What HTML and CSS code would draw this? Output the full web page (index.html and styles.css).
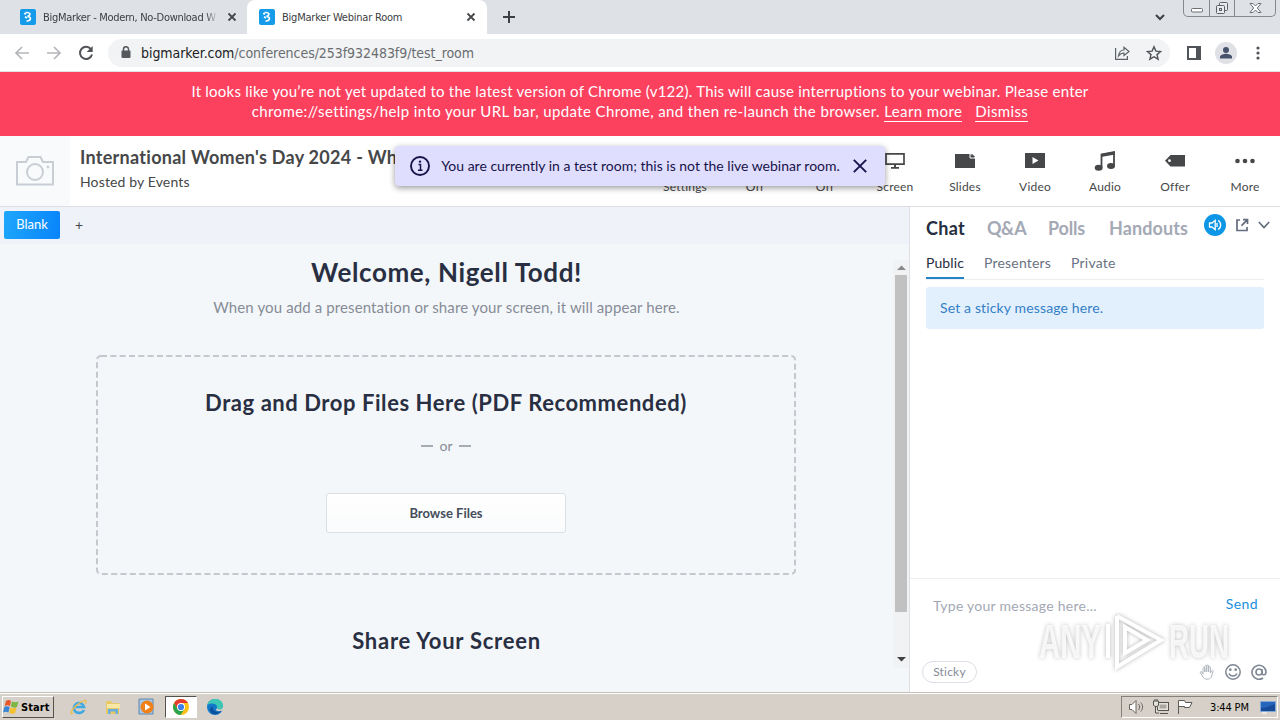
FILE: index.html
```html
<!DOCTYPE html>
<html lang="en">
  <head>
    <meta charset="UTF-8" />
    <meta name="viewport" content="width=device-width, initial-scale=1.0" />
    <title>BigMarker Webinar Room</title>
    <link rel="stylesheet" href="styles.css">
  </head>
  <body>
    <!-- Browser tabs -->
    <div class="tab-strip">
      <div class="tab">
        <svg class="favicon" width="16" height="16" viewBox="0 0 16 16"><rect width="16" height="16" rx="2" fill="#159bea"/><path d="M4 4.500l2 .5M5.500 3.500c5-.5 6 2 2 4 4.500 0 3.500 5-1 4.500M5 7.800l2 1.200" fill="none" stroke="#fff" stroke-width="1.600"/></svg>
        <span class="tab-title fade">BigMarker - Modern, No-Download W</span>
        <svg class="tab-close" width="10" height="10" viewBox="0 0 10 10"><path d="M1.500 1.500l7 7M8.500 1.500l-7 7" stroke="#45484c" stroke-width="1.800"/></svg>
      </div>
      <div class="tab active">
        <svg class="favicon" width="16" height="16" viewBox="0 0 16 16"><rect width="16" height="16" rx="2" fill="#159bea"/><path d="M4 4.500l2 .5M5.500 3.500c5-.5 6 2 2 4 4.500 0 3.500 5-1 4.500M5 7.800l2 1.200" fill="none" stroke="#fff" stroke-width="1.600"/></svg>
        <span class="tab-title">BigMarker Webinar Room</span>
        <svg class="tab-close" width="10" height="10" viewBox="0 0 10 10"><path d="M1.500 1.500l7 7M8.500 1.500l-7 7" stroke="#45484c" stroke-width="1.800"/></svg>
      </div>
      <svg class="new-tab" width="12" height="12" viewBox="0 0 12 12"><path d="M6 0v12M0 6h12" stroke="#3c4043" stroke-width="2"/></svg>
      <svg class="tab-search" width="10" height="7" viewBox="0 0 10 7"><path d="M1 1l4 4 4-4" fill="none" stroke="#3c4043" stroke-width="2"/></svg>
      <div class="window-buttons">
        <span><svg width="12" height="16" viewBox="0 0 12 16"><rect x=".5" y="8.500" width="11" height="3.500" rx="1" fill="#fff" stroke="#6b6e73"/></svg></span>
        <span><svg width="14" height="14" viewBox="0 0 14 14" fill="#e8eaee" stroke="#5c5f64"><rect x="4.500" y="1.500" width="8" height="8" rx="1"/><rect x="1.500" y="4.500" width="8" height="8" rx="1"/><rect x="4.500" y="7.500" width="2" height="2"/></svg></span>
        <span><svg width="13" height="12" viewBox="0 0 13 12"><path d="M1 1.500h3L6.500 4 9 1.500h3L8.300 6l3.700 4.500H9L6.500 8 4 10.500H1L4.700 6z" fill="#fff" stroke="#6b6e73"/></svg></span>
      </div>
    </div>

    <!-- Address bar -->
    <div class="toolbar">
      <svg class="nav-icon" width="16" height="16" viewBox="0 0 16 16"><path d="M15 8H2M8 2L2 8l6 6" fill="none" stroke="#b4b6b9" stroke-width="1.700"/></svg>
      <svg class="nav-icon" width="16" height="16" viewBox="0 0 16 16"><path d="M1 8h13M8 2l6 6-6 6" fill="none" stroke="#b4b6b9" stroke-width="1.700"/></svg>
      <svg class="nav-icon" width="16" height="16" viewBox="0 0 16 16"><path d="M13.200 4.500A6.100 6.100 0 1 0 14 9.500" fill="none" stroke="#505357" stroke-width="2"/><path d="M14.700 1v6H8.700z" fill="#505357"/></svg>
      <div class="url-bar">
        <svg width="10" height="13" viewBox="0 0 10 13"><rect x=".5" y="4.500" width="9" height="7.500" rx="1" fill="#55585c"/><path d="M2.500 5V3.200a2.500 2.500 0 0 1 5 0V5" fill="none" stroke="#55585c" stroke-width="1.500"/></svg>
        <span class="url"><b>bigmarker.com</b>/conferences/253f932483f9/test_room</span>
        <svg class="share" width="16" height="16" viewBox="0 0 16 16" fill="none" stroke="#5f6368" stroke-width="1.200"><path d="M1.600 3v11.400h11.800V11"/><path d="M4.500 11C5 7 7 5 10 5V2.300L15 6.500 10 10.500V8C7.500 8 6 9 4.500 11z"/></svg>
        <svg width="16" height="16" viewBox="0 0 16 16"><path d="M8 1.800l1.900 4.300 4.700.4-3.600 3.100 1.100 4.600L8 11.700l-4.100 2.500L5 9.600 1.400 6.500l4.700-.4z" fill="none" stroke="#505357" stroke-width="1.400"/></svg>
      </div>
      <svg class="panel-icon" width="14" height="14" viewBox="0 0 14 14"><rect x="1" y="1" width="12" height="12" fill="none" stroke="#505357" stroke-width="2"/><path d="M9 1h4v12H9z" fill="#505357"/></svg>
      <svg class="avatar" width="22" height="22" viewBox="0 0 22 22"><circle cx="11" cy="11" r="11" fill="#dfe1e6"/><circle cx="11" cy="8" r="3" fill="#46526b"/><path d="M5 16.500v-1.700c0-2 4-3 6-3s6 1 6 3v1.700z" fill="#46526b"/></svg>
      <svg class="kebab" width="4" height="14" viewBox="0 0 4 14" fill="#505357"><circle cx="2" cy="2" r="1.600"/><circle cx="2" cy="7" r="1.600"/><circle cx="2" cy="12" r="1.600"/></svg>
    </div>

    <!-- Update warning -->
    <div class="banner">
      <div class="banner-line one">It looks like you’re not yet updated to the latest version of Chrome (v122). This will cause interruptions to your webinar. Please enter</div>
      <div class="banner-line two">chrome://settings/help into your URL bar, update Chrome, and then re-launch the browser. <a>Learn more</a><a class="dismiss">Dismiss</a></div>
    </div>

    <!-- Room header -->
    <header class="room-header">
      <div class="room-photo">
        <svg width="40" height="32" viewBox="0 0 40 32" fill="none" stroke="#c9ced4" stroke-width="2"><path d="M2 7h9l2.500-5h12L28 7h10v22.500H2z"/><circle cx="20" cy="17" r="8"/><circle cx="33" cy="12" r="1" fill="#c9ced4" stroke-width="1"/></svg>
      </div>
      <div class="room-info">
        <h1>International Women's Day 2024 - Wh</h1>
        <p>Hosted by Events</p>
      </div>
      <nav class="actions">
        <div class="action"><span class="action-icon"></span>Settings</div>
        <div class="action"><span class="action-icon"></span>Off</div>
        <div class="action"><span class="action-icon"></span>Off</div>
        <div class="action"><svg class="action-icon" viewBox="0 0 22 20"><path d="M2 2.800h18v10.400H2z" fill="none" stroke="#454749" stroke-width="1.700"/><path d="M10 13h2v3h3v1.700H7V16h3z" fill="#454749"/></svg>Screen</div>
        <div class="action"><svg class="action-icon" viewBox="0 0 22 20"><path d="M1 3h15l5 4v10H1z" fill="#454749"/><path d="M16 2.500V7h5" fill="none" stroke="#fff"/><path d="M17.500 2.500L21 5.700V6h-3.500z" fill="#454749"/></svg>Slides</div>
        <div class="action"><svg class="action-icon" viewBox="0 0 22 20"><path d="M1 2h20v15H1z" fill="#454749"/><path d="M8.500 6l6 3.500-6 3.500z" fill="#fff"/></svg>Video</div>
        <div class="action"><svg class="action-icon" viewBox="0 0 22 20"><path d="M7.500 16V3.500L20 1.200V14" fill="none" stroke="#454749" stroke-width="1.800"/><path d="M7 3l14-2.500v3L7 6z" fill="#454749"/><ellipse cx="4.700" cy="16.700" rx="4" ry="3" fill="#454749"/><ellipse cx="17" cy="15" rx="4" ry="3" fill="#454749"/></svg>Audio</div>
        <div class="action"><svg class="action-icon" viewBox="0 0 22 20"><path d="M6.500 4H21v11.500H6.500L1 9.700z" fill="#454749"/><circle cx="5.500" cy="9.700" r="1.400" fill="#fff"/></svg>Offer</div>
        <div class="action"><svg class="action-icon" viewBox="0 0 22 20" fill="#454749"><circle cx="3.500" cy="10" r="2.300"/><circle cx="11" cy="10" r="2.300"/><circle cx="18.500" cy="10" r="2.300"/></svg>More</div>
      </nav>
      <div class="toast">
        <svg width="20" height="20" viewBox="0 0 20 20"><circle cx="10" cy="10" r="9" fill="none" stroke="#17124a" stroke-width="1.900"/><path d="M8.500 8.500h2V14M8 14.200h4.500" fill="none" stroke="#17124a" stroke-width="1.500"/><circle cx="10" cy="5.600" r="1.200" fill="#17124a"/></svg>
        <span>You are currently in a test room; this is not the live webinar room.</span>
        <svg width="14" height="14" viewBox="0 0 14 14"><path d="M.8.8l12.400 12.400M13.200.8L.8 13.200" stroke="#17124a" stroke-width="1.900"/></svg>
      </div>
    </header>

    <main class="room">
      <!-- Presentation area -->
      <section class="stage">
        <div class="slide-tabs">
          <button class="blank-tab">Blank</button>
          <span class="add-tab">+</span>
        </div>
        <div class="stage-body">
          <div class="welcome">
            <h2>Welcome, Nigell Todd!</h2>
            <p class="subtitle">When you add a presentation or share your screen, it will appear here.</p>
            <div class="dropzone">
              <svg class="dash-border" width="700" height="220"><rect x="1" y="1" width="698" height="218" rx="4" fill="none" stroke="#c5c9cd" stroke-width="2" stroke-dasharray="6 3.330"/></svg>
              <h3>Drag and Drop Files Here (PDF Recommended)</h3>
              <div class="or">or</div>
              <button class="browse">Browse Files</button>
            </div>
            <h3 class="share-title">Share Your Screen</h3>
          </div>
          <div class="scrollbar">
            <svg width="9" height="5" viewBox="0 0 9 5"><path d="M0 5l4.500-4.500L9 5z" fill="#8a8a8a"/></svg>
            <div class="thumb"></div>
            <svg width="9" height="5" viewBox="0 0 9 5"><path d="M0 0l4.500 4.500L9 0z" fill="#404040"/></svg>
          </div>
        </div>
      </section>

      <!-- Chat -->
      <aside class="chat">
        <div class="panel-tabs">
          <span class="panel-tab current t-chat">Chat</span>
          <span class="panel-tab t-qa">Q&amp;A</span>
          <span class="panel-tab t-polls">Polls</span>
          <span class="panel-tab t-handouts">Handouts</span>
          <svg class="sound" width="22" height="22" viewBox="0 0 22 22"><circle cx="11" cy="11" r="11" fill="#0d96e6"/><path d="M5.500 9H8l3.200-2.700v9.400L8 13H5.500zM13 9v4M14 6.500c3.500 1.500 3.500 7.500 0 9" fill="none" stroke="#fff" stroke-width="1.300"/></svg>
          <svg class="popout" width="14" height="14" viewBox="0 0 14 14" fill="none" stroke="#626c7c" stroke-width="1.700"><path d="M5 2H2v10.500h10V9M8 1.700h4.500V6M12.300 1.900L6.500 7.700"/></svg>
          <svg class="chevron" width="12" height="8" viewBox="0 0 12 8"><path d="M.8 1L6 6.500 11.200 1" fill="none" stroke="#626c7c" stroke-width="1.700"/></svg>
        </div>
        <div class="chat-tabs">
          <span class="chat-tab current">Public</span>
          <span class="chat-tab">Presenters</span>
          <span class="chat-tab">Private</span>
        </div>
        <div class="sticky">Set a sticky message here.</div>
        <div class="composer">
          <div class="composer-top">
            <span class="placeholder">Type your message here...</span>
            <span class="send">Send</span>
          </div>
          <div class="composer-bottom">
            <span class="sticky-btn">Sticky</span>
            <svg width="16" height="16" viewBox="0 0 16 16" fill="none" stroke="#b0b6bf"><path d="M4 10V4.500c0-1.500 1.800-1.500 1.800 0V8 2.500c0-1.500 1.900-1.500 1.900 0V8 2c0-1.300 1.900-1.300 1.900 0v6-4.500c0-1.300 1.800-1.300 1.800 0V9l1-2c.8-1.200 2-.7 1.600.6L12.300 13c-2 3-6.300 3-8.300 0L1.500 9c-.8-1.300.7-1.800 1.500-.8z"/></svg>
            <svg width="16" height="16" viewBox="0 0 16 16" fill="none" stroke="#7f8794" stroke-width="1.500"><circle cx="8" cy="8" r="7.200"/><path d="M4 9.500c1.300 3.300 6.700 3.300 8 0"/><circle cx="5.300" cy="5.700" r=".6"/><circle cx="10.700" cy="5.700" r=".6"/></svg>
            <svg width="16" height="16" viewBox="0 0 16 16" fill="none" stroke="#7f8794" stroke-width="1.600"><circle cx="8" cy="8" r="3"/><path d="M11 5v4c0 2.500 4 2.500 4-1A7 7 0 1 0 12 14"/></svg>
          </div>
        </div>
        <svg class="watermark" width="204" height="70" viewBox="0 0 204 70">
          <text x="5" y="51" textLength="62" lengthAdjust="spacingAndGlyphs">ANY</text>
          <path d="M74 17v34M83 9v34M83 9l44 24-44 27V43M91 20l22 13-22 13z"/>
          <text x="135" y="51" textLength="60" lengthAdjust="spacingAndGlyphs">RUN</text>
        </svg>
      </aside>
    </main>

    <!-- Taskbar -->
    <footer class="taskbar">
      <div class="start">
        <svg width="16" height="16" viewBox="0 0 16 16"><path d="M3 2c2-1.500 3.500-1 5 0L7 7c-2-1-3.500-1-5.300 0z" fill="#e8572b"/><path d="M9 2.500c2 1 4 1 6.500 0L14 8c-2 1-4 .8-6.200-.4z" fill="#7db642"/><path d="M1.400 8c1.700-1.300 3.500-1 5.300 0l-1.300 5.500c-1.700-1-3.400-1-5.400 0z" fill="#3a84d6"/><path d="M7.500 8.600c2 1 4 1 6 0l-1.400 5.400c-2.200 1-4 .8-5.900-.2z" fill="#f5c02e"/></svg>
        Start
      </div>
      <div class="task-icon"><svg width="18" height="18" viewBox="0 0 18 18" fill="none"><path d="M14 12c-2 4-9 4-10-1-1-6 8-9 10-2H5" stroke="#41a8e0" stroke-width="2.600"/><path d="M3 15c-6 3 2-8 8-11 5-3 6-2 4 2" stroke="#edbd48" stroke-width="1.300"/></svg></div>
      <div class="task-icon"><svg width="18" height="18" viewBox="0 0 18 18"><path d="M2 3h5l1 2h7v11H2z" fill="#e8c968"/><path d="M3 6h13v4H3z" fill="#f8e7a5"/><path d="M4 16v-5h10v5h-2.500v-2.500h-5V16z" fill="#69aedd"/></svg></div>
      <div class="task-icon"><svg width="18" height="18" viewBox="0 0 18 18"><path d="M1 1h14v15H1z" fill="#a9c7e4" stroke="#5d87b2"/><circle cx="9" cy="9" r="6.500" fill="#ef8118"/><path d="M7 5.500l5.500 3.500L7 12.500z" fill="#fff"/></svg></div>
      <div class="task-icon open"><svg width="18" height="18" viewBox="0 0 18 18"><circle cx="9" cy="9" r="8" fill="#fbc116"/><path d="M2.100 5A8 8 0 0 1 16 5H9L5.500 11z" fill="#e33b2e"/><path d="M2.100 5A8 8 0 0 0 8.500 17l4-6H5.500z" fill="#2ba24c"/><circle cx="9" cy="9" r="4" fill="#fff"/><circle cx="9" cy="9" r="3.100" fill="#3f7fe8"/></svg></div>
      <div class="task-icon"><svg width="18" height="18" viewBox="0 0 18 18"><circle cx="9" cy="9" r="8" fill="#1478c8"/><path d="M1.500 7C3-1 17-1 17 8c0 4-5 4-6 2 1-4-5-6-9.500-3z" fill="#3cc8b4"/><path d="M7 9c-1 4 4 6 8 4-3 5-11 4-11-1 0-2 1-3 3-3z" fill="#0c4f9b"/><path d="M11 10c1 2 5 2 6-1v3c-3 2-7 1-7 0z" fill="#d6d0c8"/></svg></div>
      <div class="tray">
        <svg width="18" height="16" viewBox="0 0 18 16" fill="#fff" stroke="#68655f"><path d="M1.500 5.500H4l4-4v13l-4-4H1.500z"/><path d="M10.500 5c1.500 2 1.500 4 0 6M12.700 3.500c2.500 3 2.500 6 0 9" fill="none"/></svg>
        <svg width="18" height="16" viewBox="0 0 18 16" fill="#e5e2dc" stroke="#55524d"><rect x="5.500" y="3.500" width="11" height="8"/><path d="M7.500 5.500h7v4h-7z" fill="#aaa7a0" stroke="none"/><path d="M8 14.500h8M3.500 8v6H7M1.500 2v4c0 2 5 2 5 0V2zM3 0v2M5 0v2"/></svg>
        <svg width="17" height="16" viewBox="0 0 17 16" fill="#fff" stroke="#5e5b56"><path d="M2.500 15V1.500h6l1 2H16l-2.500 5H8.500v-1h-6"/></svg>
        <span class="clock">3:44 PM</span>
        <svg width="16" height="14" viewBox="0 0 16 14"><path d="M.5 1.500h15v10H.5z" fill="#2765bd" stroke="#84abd8"/><path d="M1 8c5 0 9-2 14-4v7H1z" fill="#174b98"/><path d="M2 13h5" stroke="#fff"/></svg>
      </div>
    </footer>
  </body>
</html>
```
FILE: styles.css
```css
* {
  box-sizing: border-box;
}

body {
  font-family: Lato, "Liberation Sans", sans-serif;
  margin: 0;
  width: 1280px;
  height: 720px;
  display: flex;
  flex-direction: column;
  overflow: hidden;
  background-color: #fff;
  color: #454749;
}

h1,
h2,
h3,
p {
  margin: 0;
}

svg {
  flex: none;
}

span,
a,
h1,
h2,
h3 {
  white-space: nowrap;
}

/* Browser tabs */
.tab-strip {
  display: flex;
  height: 34px;
  flex: none;
  background-color: #dee1e6;
  font-family: "DejaVu Sans Condensed", "DejaVu Sans", sans-serif;
  font-size: 11px;
  font-stretch: condensed;
  color: #3c4043;
}

.tab {
  display: flex;
  align-items: center;
  width: 247px;
  padding: 0 10px 0 20px;
}

.tab.active {
  width: 240px;
  padding: 0 11px 0 12px;
  background-color: #fff;
  border-radius: 8px 8px 0 0;
}

.tab-title {
  margin-left: 7px;
  flex: 1;
  letter-spacing: -0.22px;
}

.fade {
  margin-right: 9px;
  letter-spacing: -0.3px;
  -webkit-mask-image: linear-gradient(to right, #000 93%, transparent);
  mask-image: linear-gradient(to right, #000 93%, transparent);
}

.new-tab {
  margin: 11px 0 0 16px;
}

.tab-search {
  margin: 14px 18px 0 auto;
}

.window-buttons {
  display: flex;
  width: 93px;
  height: 17px;
  margin-right: 4px;
  border: 1px solid #85888d;
  border-top: 0;
  border-radius: 0 0 5px 5px;
}

.window-buttons span {
  display: flex;
  align-items: center;
  justify-content: center;
  width: 25px;
}

.window-buttons span + span {
  border-left: 1px solid #85888d;
}

.window-buttons span:last-child {
  flex: 1;
}

/* Address bar */
.toolbar {
  display: flex;
  align-items: center;
  flex: none;
  height: 38px;
  padding: 0 20px 0 14px;
  border-bottom: 1px solid #dfe1e5;
}

.nav-icon {
  margin-right: 16px;
}

.url-bar {
  display: flex;
  align-items: center;
  width: 1062px;
  height: 28px;
  margin-left: -2px;
  padding: 0 8px 0 13px;
  border-radius: 14px;
  background-color: #f1f3f4;
}

.url {
  flex: 1;
  margin-left: 10px;
  font-family: "DejaVu Sans Condensed", "DejaVu Sans", sans-serif;
  font-stretch: condensed;
  font-size: 14px;
  letter-spacing: -0.05px;
  color: #6a6d71;
}

.url b {
  font-weight: normal;
  color: #202124;
}

.share {
  margin-right: 16px;
}

.panel-icon {
  margin-left: 17px;
}

.avatar {
  margin-left: 14px;
}

.kebab {
  margin-left: auto;
}

/* Update warning */
.banner {
  flex: none;
  height: 64px;
  padding-top: 9px;
  background-color: #fc415f;
  color: #fff;
  font-size: 15px;
  line-height: 20px;
  text-align: center;
  white-space: nowrap;
}

.one {
  letter-spacing: 0.24px;
}

.two {
  letter-spacing: 0.39px;
}

.banner a {
  display: inline-block;
  line-height: 19px;
  border-bottom: 1px solid #fff;
}

.banner .dismiss {
  margin-left: 13px;
}

/* Room header */
.room-header {
  position: relative;
  display: flex;
  flex: none;
  height: 71px;
  border-bottom: 1px solid #dddfe3;
}

.room-photo {
  display: flex;
  align-items: center;
  justify-content: center;
  width: 70px;
  background-color: #f8fafc;
}

.room-info {
  width: 320px;
  padding: 10px 0 0 10px;
}

.room-info h1 {
  font-size: 18px;
  line-height: 22px;
  letter-spacing: 0.28px;
}

.room-info p {
  margin-top: 4px;
  font-size: 14px;
  line-height: 20px;
  letter-spacing: 0.14px;
}

.actions {
  display: flex;
  margin-left: auto;
}

.action {
  display: flex;
  flex-direction: column;
  align-items: center;
  width: 70px;
  padding-top: 15px;
  font-size: 12px;
  line-height: 16px;
  letter-spacing: 0.2px;
}

.action-icon {
  width: 22px;
  height: 20px;
  margin-bottom: 8px;
}

.toast {
  position: absolute;
  left: 395px;
  top: 10px;
  display: flex;
  align-items: center;
  justify-content: space-between;
  width: 490px;
  height: 40px;
  padding: 0 18px 0 15px;
  border-radius: 4px;
  background-color: #e0defe;
  box-shadow: 0 2px 6px rgba(0, 0, 0, 0.4);
  color: #17124a;
  font-size: 14px;
}

.toast span {
  margin: 0 2px 2px 0;
}

/* Presentation area */
.room {
  display: flex;
  flex: 1;
  min-height: 0;
}

.stage {
  display: flex;
  flex-direction: column;
  width: 910px;
  background-color: #f4f7fa;
  border-right: 1px solid #dde1e6;
}

.slide-tabs {
  display: flex;
  align-items: center;
  height: 37px;
  padding: 0 0 2px 4px;
  background-color: #eff2f9;
}

.blank-tab {
  width: 56px;
  height: 28px;
  padding: 0 0 1px;
  border: 0;
  border-radius: 2px;
  background: linear-gradient(100deg, #1ea7fc, #0884fa);
  color: #fff;
  font-family: inherit;
  font-size: 13px;
}

.add-tab {
  margin-left: 15px;
  font-size: 14px;
}

.stage-body {
  display: flex;
  height: 424px;
}

.welcome {
  width: 893px;
  padding-top: 11px;
  color: #292f42;
  text-align: center;
}

.welcome h2 {
  font-size: 26px;
  line-height: 34px;
  letter-spacing: 0.62px;
}

.subtitle {
  margin-top: 7px;
  font-size: 15px;
  line-height: 22px;
  letter-spacing: 0.12px;
  color: #868c97;
}

.dropzone {
  position: relative;
  width: 700px;
  height: 220px;
  margin: 37px 0 0 96px;
  padding-top: 34px;
}

.dash-border {
  position: absolute;
  left: 0;
  top: 0;
}

h3 {
  font-size: 22px;
  line-height: 28px;
  letter-spacing: 0.56px;
}

.or {
  display: flex;
  align-items: center;
  justify-content: center;
  gap: 6px;
  margin-top: 18px;
  font-size: 14px;
  line-height: 22px;
  color: #868c96;
}

.or::before,
.or::after {
  content: "";
  width: 12px;
  height: 2px;
  background-color: #a7abb2;
}

.browse {
  width: 240px;
  height: 40px;
  margin-top: 36px;
  border: 1px solid #dce0e4;
  border-radius: 3px;
  background: linear-gradient(#fff, #fafbfc);
  color: #454d5b;
  font-family: inherit;
  font-size: 13px;
  font-weight: bold;
}

.share-title {
  margin-top: 52px;
  letter-spacing: 0.75px;
}

.scrollbar {
  display: flex;
  flex-direction: column;
  align-items: center;
  width: 16px;
  height: 408px;
  margin-top: 16px;
  padding: 5px 0 6px;
  background-color: #f1f2f3;
}

.thumb {
  width: 12px;
  height: 337px;
  margin: 5px 0 auto;
  background-color: #c1c1c1;
}

/* Chat */
.chat {
  position: relative;
  display: flex;
  flex-direction: column;
  flex: 1;
  background-color: #fff;
}

.panel-tabs {
  display: flex;
  height: 42px;
  padding: 7px 10px 0 16px;
}

.panel-tab {
  margin-top: 1px;
  font-size: 18px;
  font-weight: bold;
  line-height: 26px;
  color: #a4a9b5;
}

.current {
  color: #262d40;
}

.t-chat {
  width: 61px;
  letter-spacing: 0.3px;
}

.t-qa {
  width: 61px;
  letter-spacing: -0.5px;
}

.t-polls {
  width: 61px;
  letter-spacing: -0.2px;
}

.t-handouts {
  width: 95px;
  letter-spacing: 0.1px;
}

.popout {
  margin: 4px 0 0 9px;
}

.chevron {
  margin: 7px 0 0 9px;
}

.chat-tabs {
  display: flex;
  gap: 20px;
  height: 31px;
  margin: 0 16px;
  border-bottom: 1px solid #eceef1;
}

.chat-tab {
  height: 30px;
  font-size: 14px;
  line-height: 28px;
  letter-spacing: 0.2px;
  color: #697282;
}

.chat-tab.current {
  border-bottom: 2px solid #2484c8;
  letter-spacing: 0.1px;
  color: #262d40;
}

.sticky {
  height: 42px;
  margin: 7px 16px 0;
  padding-left: 14px;
  border-radius: 3px;
  background-color: #e2f0fd;
  color: #347fc6;
  font-size: 14px;
  letter-spacing: 0.14px;
  line-height: 42px;
}

.composer {
  display: flex;
  flex-direction: column;
  justify-content: space-between;
  height: 114px;
  margin-top: auto;
  padding: 14px 12px 9px;
  border-top: 1px solid #eceef1;
}

.composer-top,
.composer-bottom {
  display: flex;
  align-items: center;
}

.composer-top {
  justify-content: space-between;
  padding: 0 10px 0 11px;
  font-size: 14px;
}

.placeholder {
  padding-top: 4px;
  letter-spacing: 0.26px;
  color: #a3a8b4;
}

.send {
  letter-spacing: 0.4px;
  color: #188fdd;
}

.composer-bottom {
  gap: 10px;
}

.sticky-btn {
  width: 55px;
  height: 22px;
  margin-right: auto;
  border: 1px solid #dcdfe8;
  border-radius: 11px;
  color: #858b98;
  font-size: 12px;
  letter-spacing: 0.2px;
  line-height: 20px;
  text-align: center;
}

.composer-bottom svg:last-child {
  margin-right: 1px;
}

.watermark {
  position: absolute;
  left: 124px;
  top: 400px;
  fill: rgba(255, 255, 255, 0.8);
  font-family: "Liberation Sans", sans-serif;
  font-size: 48px;
  font-weight: bold;
  filter: drop-shadow(0 0 2px rgba(0, 0, 0, 0.3));
}

.watermark path {
  fill: none;
  stroke: #fff;
  stroke-width: 4;
}

/* Taskbar */
.taskbar {
  display: flex;
  align-items: center;
  flex: none;
  height: 28px;
  padding: 1px 2px 0;
  border-top: 1px solid #c4c0b9;
  box-shadow: inset 0 1px #fff;
  background-color: #d6d0c8;
  color: #000;
  font-family: "DejaVu Sans Condensed", "DejaVu Sans", sans-serif;
  font-stretch: condensed;
  font-size: 11px;
}

.start {
  display: flex;
  align-items: center;
  gap: 2px;
  width: 52px;
  height: 22px;
  margin-right: 9px;
  border: 1px solid;
  border-color: #fff #55524d #55524d #fff;
  font-weight: bold;
  letter-spacing: 0.1px;
}

.task-icon {
  display: flex;
  align-items: center;
  justify-content: center;
  width: 32px;
  height: 22px;
  margin-right: 2px;
}

.task-icon.open {
  border: 1px solid;
  border-color: #55524d #fff #fff #55524d;
  background-color: #fff;
}

.tray {
  display: flex;
  align-items: center;
  gap: 6px;
  width: 157px;
  height: 22px;
  margin-left: auto;
  padding-left: 6px;
  border: 1px solid;
  border-color: #85817a #fff #fff #85817a;
}

.clock {
  width: 40px;
  margin: 0 4px 0 11px;
  letter-spacing: -0.15px;
}
```
